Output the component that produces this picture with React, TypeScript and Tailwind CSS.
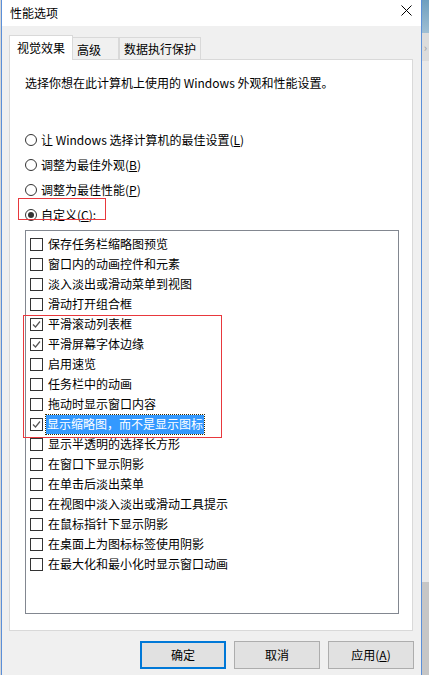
import React from 'react'

const ITEMS: { label: string; checked: boolean; selected?: boolean }[] = [
  { label: '保存任务栏缩略图预览', checked: false },
  { label: '窗口内的动画控件和元素', checked: false },
  { label: '淡入淡出或滑动菜单到视图', checked: false },
  { label: '滑动打开组合框', checked: false },
  { label: '平滑滚动列表框', checked: true },
  { label: '平滑屏幕字体边缘', checked: true },
  { label: '启用速览', checked: false },
  { label: '任务栏中的动画', checked: false },
  { label: '拖动时显示窗口内容', checked: false },
  { label: '显示缩略图，而不是显示图标', checked: true, selected: true },
  { label: '显示半透明的选择长方形', checked: false },
  { label: '在窗口下显示阴影', checked: false },
  { label: '在单击后淡出菜单', checked: false },
  { label: '在视图中淡入淡出或滑动工具提示', checked: false },
  { label: '在鼠标指针下显示阴影', checked: false },
  { label: '在桌面上为图标标签使用阴影', checked: false },
  { label: '在最大化和最小化时显示窗口动画', checked: false },
]

const Radio = ({ on, children }: { on?: boolean; children: React.ReactNode }) => (
  <div className="h-[25px] flex items-center pl-[15px]">
    <span className="w-[12px] h-[12px] rounded-full border border-[#333] bg-white flex items-center justify-center">
      {on && <span className="w-[6px] h-[6px] rounded-full bg-[#333]" />}
    </span>
    <span className="ml-[4px]">{children}</span>
  </div>
)

const Check = ({ checked }: { checked: boolean }) => (
  <span className="w-[13px] h-[13px] border border-[#333] bg-white shrink-0 flex items-center justify-center">
    {checked && (
      <svg width="11" height="11" viewBox="0 0 11 11">
        <polyline points="2,5.5 4.5,8 9,2.5" fill="none" stroke="#555" strokeWidth="1.2" />
      </svg>
    )}
  </span>
)

const App = () => {
  return (
    <div className="w-[429px] h-[675px] flex overflow-hidden text-[12px] leading-[16px] text-black font-['Noto_Sans_CJK_SC','Noto_Sans',sans-serif]">
      <div className="w-px bg-[#d6d6d6]" />

      {/* dialog */}
      <div className="w-[421px] border-x border-[#5b8fd8] bg-[#f0f0f0] flex flex-col">
        <div className="h-[26px] bg-white flex items-center justify-between pl-[8px] pr-[9px]">
          <span>性能选项</span>
          <svg width="11" height="11" viewBox="0 0 11 11" className="mb-[6px]">
            <path d="M0.5 0.5 L10.5 10.5 M10.5 0.5 L0.5 10.5" stroke="#000" strokeWidth="1" />
          </svg>
        </div>

        <div className="pt-[9px] pl-[7px] pr-[8px]">
          {/* tabs */}
          <div className="flex items-end h-[24px]">
            <div className="relative z-10 w-[64px] h-[25px] mb-[-1px] bg-white border-x border-t border-[#d9d9d9] flex items-center justify-center pb-[1px]">
              视觉效果
            </div>
            <div className="w-[46px] h-[22px] border-r border-t border-[#d9d9d9] flex items-center pl-[4px] pt-[2px]">
              高级
            </div>
            <div className="w-[82px] h-[22px] border-x border-t border-[#d9d9d9] flex items-center justify-center pt-[1px]">
              数据执行保护
            </div>
          </div>

          {/* panel */}
          <div className="bg-white border border-[#d9d9d9] pt-[15px] pb-[16px]">
            <div className="pl-[15px] h-[16px]">选择你想在此计算机上使用的 Windows 外观和性能设置。</div>

            <div className="mt-[36px]">
              <Radio>
                让 Windows 选择计算机的最佳设置(<span className="underline">L</span>)
              </Radio>
              <Radio>
                调整为最佳外观(<span className="underline">B</span>)
              </Radio>
              <Radio>
                调整为最佳性能(<span className="underline">P</span>)
              </Radio>
              <div className="relative">
                <Radio on>
                  自定义(<span className="underline">C</span>):
                </Radio>
                <div className="absolute left-[8px] top-[-4px] w-[88px] h-[22px] border border-[#e8383d]" />
              </div>
            </div>

            <div className="relative mt-[3px] ml-[15px] mr-[13px] h-[384px] border border-[#828790] pt-[3px]">
              {ITEMS.map((item) => (
                <div key={item.label} className="h-[20px] flex items-center pl-[4px]">
                  <Check checked={item.checked} />
                  <span
                    className={
                      item.selected
                        ? 'ml-[3px] px-[1px] h-[19px] flex items-center bg-[#3399ff] text-white outline outline-1 outline-dotted outline-[#3a2a00]'
                        : 'ml-[4px] px-[1px]'
                    }
                  >
                    {item.label}
                  </span>
                </div>
              ))}
              <div className="absolute z-10 left-[-3px] top-[84px] w-[199px] h-[123px] ring-1 ring-inset ring-[#e8383d]" />
            </div>
          </div>
        </div>

        {/* buttons */}
        <div className="mt-[10px] flex justify-end gap-2 pr-[7px]">
          <button className="w-[86px] h-[28px] bg-[#e1e1e1] border-2 border-[#0078d7]">确定</button>
          <button className="w-[86px] h-[28px] bg-[#e1e1e1] border border-[#adadad]">取消</button>
          <button className="w-[86px] h-[28px] bg-[#e1e1e1] border border-[#adadad]">
            应用(<span className="underline">A</span>)
          </button>
        </div>
      </div>

      {/* background window edge */}
      <div className="w-[7px] flex flex-col">
        <div className="h-[33px] bg-gradient-to-b from-[#6f9fbf] to-[#9fbfd4]" />
        <div className="h-[28px] bg-[#dcdcdc] flex items-center justify-center text-[#9a9a9a] text-[11px]">›</div>
        <div className="flex-1 bg-[#e9e9e9]" />
        <div className="h-[93px] bg-[#c6c6c6]" />
      </div>
    </div>
  )
}

export default App
